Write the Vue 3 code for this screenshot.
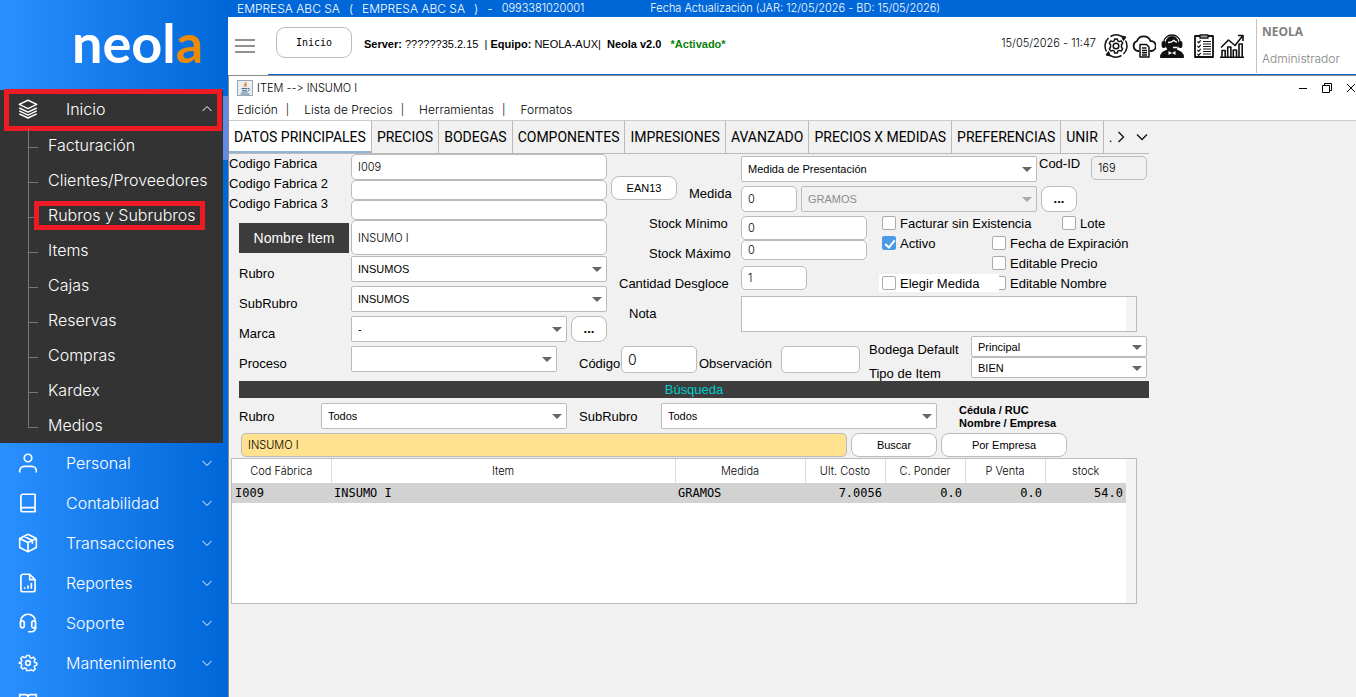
<script setup>
import { ref } from 'vue'

const submenu = ['Facturación', 'Clientes/Proveedores', 'Rubros y Subrubros', 'Items', 'Cajas', 'Reservas', 'Compras', 'Kardex', 'Medios']
const marked = 'Rubros y Subrubros'
const sections = [
  { name: 'Personal', icon: 'user' },
  { name: 'Contabilidad', icon: 'book' },
  { name: 'Transacciones', icon: 'box' },
  { name: 'Reportes', icon: 'report' },
  { name: 'Soporte', icon: 'headset' },
  { name: 'Mantenimiento', icon: 'gear' },
]
const tabs = ['DATOS PRINCIPALES', 'PRECIOS', 'BODEGAS', 'COMPONENTES', 'IMPRESIONES', 'AVANZADO', 'PRECIOS X MEDIDAS', 'PREFERENCIAS', 'UNIR']
const activeTab = ref(tabs[0])
const menus = ['Edición', 'Lista de Precios', 'Herramientas', 'Formatos']

const item = ref({
  code1: 'I009', code2: '', code3: '', name: 'INSUMO I', measure: '0', id: '169',
  min: '0', max: '0', split: '1', note: '', code: '0', obs: '',
  noStock: false, lot: false, active: true, expires: false, editPrice: false, choose: false, editName: false,
})
const query = ref('INSUMO I')
const rows = [['I009', 'INSUMO I', 'GRAMOS', '7.0056', '0.0', '0.0', '54.0']]
const columns = ['Cod Fábrica', 'Item', 'Medida', 'Ult. Costo', 'C. Ponder', 'P Venta', 'stock']
</script>

<template>
  <div class="app">
    <aside class="sidebar">
      <div class="logo">neol<span>a</span></div>
      <nav class="open-group">
        <button class="nav-row boxed" type="button">
          <svg class="nav-icon thin" viewBox="0 0 24 24"><path d="M12 1.500 1.500 6.500 12 11.500l10.500-5zM1.500 10.800 12 15.800l10.500-5M1.500 14.300 12 19.300l10.500-5M1.500 17.800 12 22.800l10.500-5" /></svg>
          <span>Inicio</span>
          <svg class="chev" viewBox="0 0 10 10"><path d="M.5 7 5 2.500 9.500 7" /></svg>
        </button>
        <ul>
          <li v-for="s in submenu" :key="s"><a href="#" :class="{ framed: s === marked }">{{ s }}</a></li>
        </ul>
      </nav>
      <button v-for="s in sections" :key="s.name" class="nav-row" type="button">
        <svg class="nav-icon" viewBox="0 0 24 24">
          <template v-if="s.icon === 'user'"><circle cx="12" cy="6" r="4.500" /><path d="M2 23.500v-2a5.500 5.500 0 0 1 5.500-5.500h9a5.500 5.500 0 0 1 5.500 5.500v2" /></template>
          <path v-else-if="s.icon === 'book'" d="M20.500 22.500H6A2.500 2.500 0 0 1 3.500 20V4A2.500 2.500 0 0 1 6 1.500h14.500zM3.500 20A2.500 2.500 0 0 1 6 17.500h14.500" />
          <path v-else-if="s.icon === 'box'" d="M12 1.500 22 6.500v11L12 22.500l-10-5v-11zM2 6.500l10 5 10-5M12 11.500v11M7.200 4l10 5v4" />
          <path v-else-if="s.icon === 'report'" d="M14 1.500H6A2.500 2.500 0 0 0 3.500 4v16A2.500 2.500 0 0 0 6 22.500h12a2.500 2.500 0 0 0 2.500-2.500V8zM14 1.500V8h6.500M8 19v-2M12 19v-4M16 19v-7" />
          <path v-else-if="s.icon === 'headset'" d="M3 14V10.500a9 9 0 0 1 18 0V15a5.500 5.500 0 0 1-5.500 7.500h-3.500M3 13a2 2 0 0 1 4.500-2v5A2.200 2.200 0 0 1 3 15zM21 13a2 2 0 0 0-4.500-2v5A2.200 2.200 0 0 0 21 15z" />
          <template v-else><circle cx="12" cy="12" r="2.800" /><path d="M10 2h4l.7 2.900 2 .8 2.600-1.500 2.600 2.700-1.500 2.600.7 1.900 2.900.7v3l-2.900.7-.7 2 1.500 2.500-2.600 2.600-2.600-1.500-2 .8L14 22.500h-4l-.7-2.900-2-.8-2.600 1.500-2.600-2.600 1.500-2.500-.8-2L0 12.500v-1l2.800-.9.800-1.900-1.500-2.600 2.600-2.700 2.600 1.500 2-.8z" transform="translate(1.500 1.300) scale(.88)" /></template>
        </svg>
        <span>{{ s.name }}</span>
        <svg class="chev" viewBox="0 0 10 10"><path d="M.5 3 5 7.500 9.500 3" /></svg>
      </button>
      <button class="nav-row" type="button" aria-label="Más">
        <svg class="nav-icon" viewBox="0 0 24 24"><path d="M2 2h7a3 3 0 0 1 3 3 3 3 0 0 1 3-3h7v16h-7a3 3 0 0 0-3 3 3 3 0 0 0-3-3H2zM12 5v16" /></svg>
      </button>
      <div class="thumb"></div>
    </aside>

    <div class="content">
      <div class="topbar">
        <div class="company"><span>EMPRESA ABC SA</span><span>(</span><span>EMPRESA ABC SA</span><span>)</span><span>-</span><span class="taxid">0993381020001</span></div>
        <div>Fecha Actualización (JAR: 12/05/2026 - BD: 15/05/2026)</div>
      </div>
      <header class="header">
        <button class="burger" type="button" aria-label="Menú"><i></i><i></i><i></i></button>
        <div class="header-main">
          <button class="home" type="button">Inicio</button>
          <p class="server"><b>Server:</b> ??????35.2.15 &nbsp;<em>|</em>&nbsp;<b>Equipo:</b> NEOLA-AUX<em>|</em>&nbsp; <b>Neola v2.0</b> &nbsp; <b class="green">*Activado*</b></p>
          <time class="clock">15/05/2026 - 11:47</time>
          <div class="tools">
            <button type="button" aria-label="Configuración"><svg viewBox="0 0 24 24"><path d="M2.500 17.500A11 11 0 0 1 4.500 4M21.500 6.500A11 11 0 0 1 19.500 20M6.500 2.500A11 11 0 0 1 18 2.600M17.500 21.500A11 11 0 0 1 6 21.400" stroke-width="1.500" /><path d="M17.500 2l4.500 1-2.500 3.500zM6.500 22l-4.500-1 2.500-3.500z" fill="#111" stroke-width="1" /><circle cx="12" cy="12" r="2.800" stroke-width="1.500" /><path d="M10.700 5h2.600l.5 1.900 1.500.7 1.900-.7 1.500 2.200-1.200 1.600v2.600l1.200 1.600-1.500 2.200-1.900-.7-1.500.7-.5 1.900h-2.600l-.5-1.900-1.500-.7-1.900.7-1.500-2.200 1.200-1.600v-2.600L5.300 9.100l1.500-2.200 1.900.7 1.500-.7z" stroke-width="1.500" /></svg></button>
            <button type="button" aria-label="Nube"><svg viewBox="0 0 24 24"><path d="M7 17H6A5.200 5.200 0 0 1 5 7a7.200 7.200 0 0 1 13.500 0A5 5 0 0 1 19 17h-1" /><path d="M8 10.500h6.500l2.500 2.500v10H8zM10 14h4.500M10 16.500h5M10 18.700h5M10 21h5" stroke-width="1.500" /></svg></button>
            <button type="button" aria-label="Asistencia"><svg viewBox="0 0 24 24"><path d="M5.500 9a6.500 7 0 0 1 13 0v2a6.500 6.500 0 0 1-13 0z" fill="#111" stroke="none" /><path d="M8 8.500c3 .2 4.500-.6 6-2.200 1 1.200 2 1.700 3 1.900M13 13.500h4.500" stroke="#fff" stroke-width="1.300" /><path d="M4 10V8a8 7 0 0 1 16 0v2" stroke-width="1.300" /><rect x="2.500" y="8" width="2.500" height="5" rx="1" fill="#111" /><rect x="19" y="8" width="2.500" height="5" rx="1" fill="#111" /><path d="M1 23.500v-2l2-3 5-2.500h8l5 2.500 2 3v2z" fill="#111" /><path d="M8.500 17l3.500 2 3.500-2v4l-3.500-2-3.500 2z" fill="#fff" stroke="none" /></svg></button>
            <button class="gap-left" type="button" aria-label="Lista"><svg viewBox="0 0 24 24"><path d="M3 2h18v21H3z" /><rect x="8" y=".8" width="8" height="3.400" fill="#999" stroke-width="1.300" /><path d="M5.500 7.500l1.200 1.300 2-2.500M5.500 12l1.200 1.300 2-2.500M5.500 16l1.200 1.300 2-2.500M5.500 20l1.200 1.300 2-2.500M11 7.500h8M11 10h8M11 12.500h8M11 15h8M11 17.500h8M11 20h8" stroke-width="1.200" /></svg></button>
            <button type="button" aria-label="Estadísticas"><svg viewBox="0 0 24 24"><path d="M0 23.300h24M2 23v-6.500h3.200V23M7.700 23v-10h3.200v10M13.300 23v-7h3.200v7M19 23V10h3.200v13" stroke-width="1.600" /><path d="M1 13.500 8.500 6l6.500 5.500L22.500 2M18 1.500h5V7" stroke-width="1.600" /></svg></button>
          </div>
          <div class="account"><b>NEOLA</b><span>Administrador</span></div>
        </div>
      </header>

      <main class="window">
        <div class="titlebar">
          <svg class="java" viewBox="0 0 16 16"><rect x=".5" y=".5" width="15" height="15" fill="#e9eef3" stroke="#9aa9b8" /><path d="M8.500 2c1.500 1.500-2.500 2.500-1 4.500M10 4c-2 1-1.500 2 -.8 3" fill="none" stroke="#e8882c" stroke-width="1.200" /><path d="M4.500 8.500h6M5 10.300h5M4.500 12h6M3.500 14h9M11 8.500c2.500-.5 2 2-.2 2.500" fill="none" stroke="#4e7290" stroke-width="1" /></svg>
          <h1>ITEM --&gt; INSUMO I</h1>
          <div class="controls">
            <button type="button" aria-label="Minimizar"><svg viewBox="0 0 10 10"><path d="M1 5.500h8" /></svg></button>
            <button type="button" aria-label="Restaurar"><svg viewBox="0 0 10 10"><path d="M.5 2.500h7v7h-7zM2.500 2.500v-2h7v7h-2" /></svg></button>
            <button type="button" aria-label="Cerrar"><svg viewBox="0 0 10 10"><path d="M1 1l8 8M9 1L1 9" /></svg></button>
          </div>
        </div>
        <div class="menubar">
          <template v-for="(m, i) in menus" :key="m">
            <button type="button">{{ m }}</button><span v-if="i < 3">|</span>
          </template>
        </div>
        <div class="tabs" role="tablist">
          <button v-for="t in tabs" :key="t" type="button" role="tab" :aria-selected="t === activeTab" :class="{ on: t === activeTab }" @click="activeTab = t">{{ t }}</button>
          <div class="tabnav"><span>.</span>
            <button type="button" aria-label="Siguiente"><svg viewBox="0 0 12 12"><path d="M3.500 1l5 5-5 5" /></svg></button>
            <button type="button" aria-label="Más pestañas"><svg viewBox="0 0 12 12"><path d="M1 3.500l5 5 5-5" /></svg></button>
          </div>
        </div>

        <form class="form" @submit.prevent>
          <div class="upper">
            <div class="left">
              <div class="codes">
                <div class="code-labels">
                  <label for="c1">Codigo Fabrica</label>
                  <label for="c2">Codigo Fabrica 2</label>
                  <label for="c3">Codigo Fabrica 3</label>
                  <button class="dark" type="button">Nombre Item</button>
                </div>
                <div class="stack">
                  <input id="c1" v-model="item.code1" class="h26">
                  <input id="c2" v-model="item.code2" class="h20">
                  <input id="c3" v-model="item.code3" class="h20">
                  <input v-model="item.name" class="h35" aria-label="Nombre Item">
                </div>
              </div>
              <div class="row">
                <label for="rubro">Rubro</label>
                <span class="sel grow"><select id="rubro"><option>INSUMOS</option></select></span>
              </div>
              <div class="row">
                <label for="sub">SubRubro</label>
                <span class="sel grow"><select id="sub"><option>INSUMOS</option></select></span>
              </div>
              <div class="row">
                <label for="marca">Marca</label>
                <span class="sel grow"><select id="marca"><option>-</option></select></span>
                <button class="pill dots" type="button">...</button>
              </div>
            </div>

            <div class="middle">
              <div class="ean"><button class="pill" type="button">EAN13</button><label for="med">Medida</label></div>
              <label class="in38" for="min">Stock Mínimo</label>
              <label class="in38" for="max">Stock Máximo</label>
              <label class="in8" for="split">Cantidad Desgloce</label>
              <label class="in18" for="note">Nota</label>
            </div>

            <div class="right">
              <div class="line">
                <span class="sel w296"><select aria-label="Presentación"><option>Medida de Presentación</option></select></span>
                <label class="codid" for="cid">Cod-ID</label>
                <input id="cid" v-model="item.id" class="ro w56 h24" readonly>
              </div>
              <div class="line gap4">
                <input id="med" v-model="item.measure" class="w56 h26">
                <span class="sel off w236"><select aria-label="Unidad" disabled><option>GRAMOS</option></select></span>
                <button class="pill dots" type="button">...</button>
              </div>
              <div class="line">
                <div class="stocks">
                  <input id="min" v-model="item.min" class="w126 h24">
                  <input id="max" v-model="item.max" class="w126 h20">
                  <input id="split" v-model="item.split" class="w66 h24">
                </div>
                <div class="checks">
                  <div class="pair wide"><label><input v-model="item.noStock" type="checkbox">Facturar sin Existencia</label><label><input v-model="item.lot" type="checkbox">Lote</label></div>
                  <div class="pair"><label><input v-model="item.active" type="checkbox">Activo</label><label><input v-model="item.expires" type="checkbox">Fecha de Expiración</label></div>
                  <div class="pair"><span></span><label><input v-model="item.editPrice" type="checkbox">Editable Precio</label></div>
                  <div class="pair"><label class="white"><input v-model="item.choose" type="checkbox">Elegir Medida</label><label><input v-model="item.editName" type="checkbox">Editable Nombre</label></div>
                </div>
              </div>
              <textarea id="note" v-model="item.note"></textarea>
            </div>
          </div>

          <div class="lower">
            <div class="row">
              <label for="proc">Proceso</label>
              <span class="sel w206"><select id="proc"><option></option></select></span>
            </div>
            <label class="cod" for="code">Código</label>
            <input id="code" v-model="item.code" class="big w76 h27">
            <label class="obs" for="obs">Observación</label>
            <input id="obs" v-model="item.obs" class="w79 h27">
            <div class="depot">
              <label for="dep">Bodega Default</label>
              <span class="sel"><select id="dep"><option>Principal</option></select></span>
              <label class="kind" for="kind">Tipo de Item</label>
              <span class="sel"><select id="kind"><option>BIEN</option></select></span>
            </div>
          </div>

          <h2 class="bar">Búsqueda</h2>
          <div class="filters">
            <label for="fr">Rubro</label>
            <span class="sel w246"><select id="fr"><option>Todos</option></select></span>
            <label class="second" for="fs">SubRubro</label>
            <span class="sel w276"><select id="fs"><option>Todos</option></select></span>
            <p>Cédula / RUC<br>Nombre / Empresa</p>
          </div>
          <div class="search">
            <input v-model="query" aria-label="Buscar item">
            <button class="pill" type="submit">Buscar</button>
            <button class="pill wider" type="button">Por Empresa</button>
          </div>
          <div class="results">
            <table>
              <colgroup><col class="k1"><col><col class="k3"><col class="k4"><col class="k4"><col class="k4"><col class="k5"></colgroup>
              <thead><tr><th v-for="c in columns" :key="c">{{ c }}</th></tr></thead>
              <tbody><tr v-for="r in rows" :key="r[0]"><td v-for="(v, i) in r" :key="i" :class="{ num: i > 2 }">{{ v }}</td></tr></tbody>
            </table>
          </div>
        </form>
      </main>
    </div>
  </div>
</template>

<style>
html, body { margin: 0; }
</style>

<style scoped>
* { box-sizing: border-box; }
button, input, select, textarea { font: inherit; color: inherit; margin: 0; }
button { padding: 0; border: 0; background: none; cursor: pointer; }
.app { display: flex; height: 100vh; overflow: hidden; font-family: "Liberation Sans", Arial, sans-serif; font-size: 13px; color: #000; }

.sidebar { position: relative; flex: none; width: 228px; overflow: hidden; background: linear-gradient(90deg, #2a8fff, #0067d9); color: #fff; font-family: Inter, sans-serif; font-size: 16px; font-weight: 300; }
.logo { height: 90px; padding-left: 72px; font: 700 54px/86px Lato, sans-serif; }
.logo span { color: #e98b06; }
.open-group { width: 223px; background: #333; }
.nav-row { display: grid; grid-template-columns: 66px 1fr 10px; align-items: center; width: 100%; height: 40px; padding-right: 16px; text-align: left; }
.open-group .nav-row { height: 38px; padding-right: 11px; }
.boxed { position: relative; }
.boxed::after { content: ""; position: absolute; inset: -1px 1px -3px 4px; border: 5px solid #ed1c24; }
.nav-icon { width: 20px; height: 20px; margin-left: 18px; fill: none; stroke: #fff; stroke-width: 2; stroke-linejoin: round; }
.nav-icon.thin { stroke-width: 1.700; }
.chev { width: 10px; height: 10px; fill: none; stroke: #fff; stroke-width: 1; }
ul { list-style: none; margin: 0; padding: 0 0 0 28px; }
li { position: relative; height: 35px; line-height: 35px; padding-left: 20px; }
li::before { content: ""; position: absolute; left: 0; top: 0; width: 9px; height: 19px; border: solid #777; border-width: 0 0 1px 1px; }
li:not(:last-child)::after { content: ""; position: absolute; left: 0; top: 18px; height: 17px; border-left: 1px solid #777; }
li a { position: relative; color: #fff; text-decoration: none; }
.framed::after { content: ""; position: absolute; inset: -4px -9px -5px -14px; border: 5px solid #ed1c24; }
.thumb { position: absolute; right: 0; top: 96px; width: 5px; height: 64px; background: #628be8; }

.content { flex: 1; min-width: 0; display: flex; flex-direction: column; background: #fff; }
.topbar { display: flex; gap: 66px; height: 17px; padding-left: 9px; background: #0067d9; color: #fff; font: 300 11px/17px Inter, sans-serif; white-space: nowrap; }
.company { display: flex; gap: 9px; font-size: 12px; }
.taxid { font-size: 11px; }
.header { display: flex; height: 58px; }
.burger { width: 40px; padding-left: 7px; }
.burger i { display: block; width: 20px; height: 2px; margin-bottom: 4px; background: #939393; }
.burger i:last-child { margin: 0; }
.header-main { flex: 1; display: flex; align-items: center; border-bottom: 1px solid #0067d9; }
.home { width: 76px; height: 31px; margin: 0 12px 6px 8px; border: 1px solid #bbb; border-radius: 9px; font: 10px "DejaVu Sans Mono", monospace; }
.server { margin: 0; padding-bottom: 4px; font-size: 11px; white-space: nowrap; }
.server em { font-style: normal; }
.green { color: #0a800a; }
.clock { margin-left: auto; padding-bottom: 6px; font: 300 11px Inter, sans-serif; }
.tools { display: flex; gap: 4px; margin: 0 12px 0 8px; }
.tools svg { display: block; width: 24px; height: 24px; fill: none; stroke: #111; stroke-width: 1.800; stroke-linejoin: round; }
.gap-left { margin-left: 4px; }
.account { display: flex; flex-direction: column; gap: 12px; width: 100px; height: 54px; padding: 5px 0 0 5px; border-left: 1px solid #c3c3c3; color: #808080; font: 300 12px/15px Inter, sans-serif; }
.account b { font-family: "Open Sans", sans-serif; font-weight: 700; }

.window { flex: 1; min-height: 0; border: solid #8c8c8c; border-width: 1px 0 0 1px; background: #f1f1f1; }
.titlebar { display: flex; align-items: center; gap: 4px; height: 24px; padding: 0 0 0 8px; background: #fff; }
.java { width: 16px; height: 16px; }
h1 { margin: 0; font: 300 11px Inter, sans-serif; font-feature-settings: "calt" 0; }
.controls { display: flex; gap: 14px; margin-left: auto; }
.controls svg { display: block; width: 10px; height: 10px; fill: none; stroke: #000; }
.menubar { display: flex; gap: 8px; height: 21px; padding: 0 8px; background: #fff; border-bottom: 1px solid #ccc; font: 300 12px/20px Inter, sans-serif; }
.menubar span { margin-right: 7px; font-size: 11px; }
.tabs { display: flex; width: 920px; max-width: 100%; height: 33px; border-bottom: 1px solid #bbb; font: 14px Roboto, sans-serif; }
.tabs > button { padding: 0 5px; border-right: 1px solid #bbb; white-space: nowrap; }
.tabs > .on { background: #fff; border-bottom: 2px solid #90b4d8; padding-top: 2px; }
.tabnav { display: flex; align-items: center; gap: 9px; padding-left: 5px; }
.tabnav span { margin-right: -6px; }
.tabnav svg { display: block; width: 12px; height: 12px; fill: none; stroke: #111; stroke-width: 1.300; }

.form { width: 920px; max-width: 100%; }
.upper { display: flex; height: 182px; }
.left { width: 378px; }
.codes { display: flex; height: 102px; }
.code-labels { width: 122px; line-height: 20px; }
.code-labels label { display: block; height: 20px; }
.dark { display: block; width: 110px; height: 30px; margin: 9px 0 0 10px; background: #3c3c3c; color: #fff; font-size: 14px; }
.stack { flex: 1; display: flex; flex-direction: column; }
input:not([type=checkbox]) { min-width: 0; padding: 0 6px; border: 1px solid #bbb; border-radius: 5px; background: #fff; font: 300 11px Inter, sans-serif; }
input.ro { background: #f1f1f1; }
input.big { font-size: 14px; }
.h20 { height: 20px; } .h24 { height: 24px; } .h26 { height: 26px; } .h27 { height: 27px; } .h35 { height: 35px; }
.w56 { width: 56px; } .w66 { width: 66px; } .w76 { width: 76px; } .w79 { width: 79px; } .w126 { width: 126px; }
.w206 { width: 206px; } .w236 { width: 236px; } .w246 { width: 246px; } .w276 { width: 276px; } .w296 { width: 296px; }
.row { display: flex; height: 30px; padding-left: 10px; }
.row label { width: 112px; padding-top: 6px; line-height: 24px; }
.sel { position: relative; display: block; height: 26px; }
.grow { flex: 1; }
.sel select { display: block; width: 100%; height: 100%; padding: 0 6px; appearance: none; border: 1px solid #bbb; border-radius: 2px; background: #fff; font-size: 11px; line-height: 14px; color: #000; opacity: 1; }
.sel::after { content: ""; position: absolute; right: 5px; top: 50%; margin-top: -2px; border: solid transparent; border-width: 5px 5px 0; border-top-color: #666; pointer-events: none; }
.sel.off select { background: #f1f1f1; color: #8c8c8c; }
.off::after { border-top-color: #aaa; }
.pill { height: 24px; border: 1px solid #bbb; border-radius: 8px; background: #fff; font-size: 11px; line-height: 14px; }
.dots { width: 36px; height: 26px; margin-left: 4px; font-weight: 700; font-size: 13px; }
.line .dots { margin-left: 0; }
.middle { display: flex; flex-direction: column; width: 134px; padding: 22px 0 0 4px; line-height: 30px; }
.ean { display: flex; gap: 12px; height: 33px; }
.ean .pill { width: 66px; }
.ean label { padding-top: 3px; }
.in38 { padding-left: 38px; } .in8 { padding-left: 8px; } .in18 { padding-left: 18px; }
.right { flex: 1; display: flex; flex-direction: column; gap: 4px; padding-top: 2px; }
.line { display: flex; }
.codid { width: 54px; padding-left: 2px; line-height: 16px; }
.gap4 { gap: 4px; }
.stocks { display: flex; flex-direction: column; align-items: flex-start; width: 138px; height: 76px; }
.stocks #split { margin-top: 6px; }
.checks { height: 76px; margin-top: -3px; }
.pair { display: grid; grid-template-columns: 110px 1fr; height: 20px; align-items: center; white-space: nowrap; }
.pair.wide { grid-template-columns: 180px 1fr; }
.pair label { display: flex; align-items: center; gap: 4px; height: 18px; padding-left: 3px; }
.white { position: relative; z-index: 1; width: 120px; background: #fff; }
input[type=checkbox] { flex: none; width: 14px; height: 14px; appearance: none; border: 1px solid #aaa; border-radius: 2px; background: #fff; position: relative; }
input[type=checkbox]:checked { background: #4a9ae8; border-color: #4a9ae8; }
input[type=checkbox]:checked::after { content: ""; position: absolute; left: 4px; top: 1px; width: 4px; height: 8px; border: solid #fff; border-width: 0 2px 2px 0; transform: rotate(40deg); }
textarea { display: block; width: 396px; height: 36px; padding: 4px 6px; resize: none; border: 1px solid #bbb; outline: 0; background: linear-gradient(#f4f4f4, #f4f4f4) right / 10px 100% no-repeat #fff; font-size: 11px; }
.lower { display: flex; align-items: flex-start; height: 45px; padding-top: 10px; white-space: nowrap; }
.cod { width: 64px; padding: 6px 0 0 22px; line-height: 24px; }
.obs { width: 84px; padding: 6px 0 0 2px; line-height: 24px; }
.depot { display: grid; grid-template-columns: 102px 176px; grid-template-rows: 21px 20px; margin: -10px 0 0 9px; line-height: 28px; }
.depot .sel { height: 21px; }
.depot .kind { line-height: 34px; }
.bar { height: 17px; margin: 0 0 0 10px; background: #3c3c3c; color: #0cc; font: 13px/17px "Liberation Sans", sans-serif; text-align: center; }
.filters { display: flex; align-items: center; height: 35px; padding-left: 10px; }
.filters label { width: 82px; padding-top: 2px; }
.filters .second { padding-left: 12px; width: 94px; }
.filters p { margin: 2px 0 0 22px; font: 700 11px/13px "Liberation Sans", sans-serif; }
.search { display: flex; gap: 4px; padding-left: 12px; }
.search input:not([type=checkbox]) { width: 606px; height: 24px; background: #ffe18f; }
.search .pill { width: 86px; }
.search .wider { width: 126px; }
.results { width: 906px; max-width: 100%; height: 146px; margin: 1px 0 0 2px; padding-right: 10px; border: 1px solid #bbb; background: linear-gradient(#f4f4f4, #f4f4f4) right / 10px 100% no-repeat #fff; }
table { width: 100%; table-layout: fixed; border-collapse: collapse; background: #fff; }
.k1 { width: 99px; } .k3 { width: 130px; } .k4 { width: 80px; } .k5 { width: 81px; }
th { height: 24px; padding: 0; border-right: 1px solid #ddd; font: 300 11px Inter, sans-serif; }
th:last-child { border: 0; }
td { height: 20px; padding: 0 3px; background: #d2d2d2; font: 12px/16px "DejaVu Sans Mono", monospace; }
.num { text-align: right; }
</style>
